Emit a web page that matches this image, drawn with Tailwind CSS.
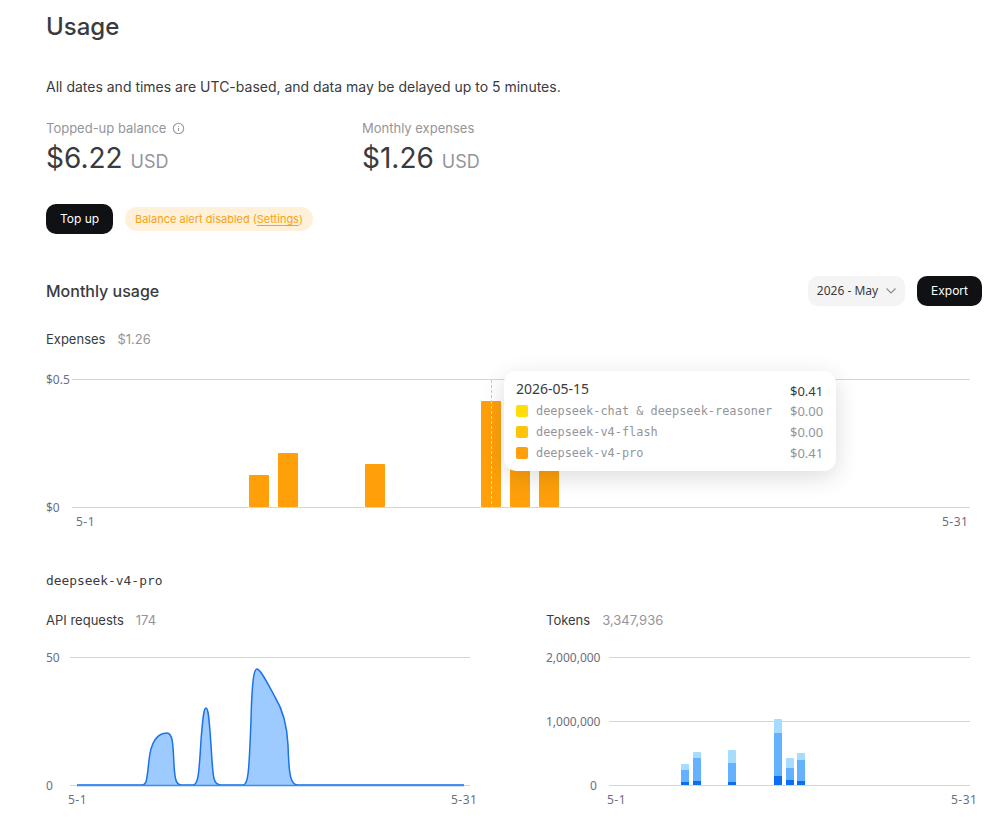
<!DOCTYPE html>
<html lang="en">
  <head>
    <meta charset="UTF-8" />
    <meta name="viewport" content="width=device-width, initial-scale=1.0" />
    <title>Usage</title>
    <script src="https://cdn.jsdelivr.net/npm/@tailwindcss/browser@4"></script>
  </head>
  <body class="bg-white font-['Inter',sans-serif] text-[#3a3b40] overflow-hidden h-[829px]">
    <main class="relative w-[1008px] pl-[46px] pr-[26px]">
      <h1 class="text-2xl leading-[32px] pt-[11px] font-medium">Usage</h1>

      <p class="mt-[34px] text-sm leading-[20px]">All dates and times are UTC-based, and data may be delayed up to 5 minutes.</p>

      <div class="mt-[22px] flex">
        <div class="w-[316px]">
          <div class="flex items-center gap-[6px] text-[13px] leading-[18px] text-[#94959b]">
            Topped-up balance
            <svg class="w-[13px] h-[13px]" viewBox="0 0 14 14" fill="none" stroke="currentColor" stroke-width="1.1">
              <circle cx="7" cy="7" r="5.6" />
              <path d="M7 6.4v3.2M7 4.2v1" />
            </svg>
          </div>
          <div class="mt-[3px] flex items-baseline gap-[8px]">
            <span class="text-[28px] leading-[36px]">$6.22</span>
            <span class="text-lg text-[#94959b]">USD</span>
          </div>
        </div>
        <div>
          <div class="text-[13px] leading-[18px] text-[#94959b]">Monthly expenses</div>
          <div class="mt-[3px] flex items-baseline gap-[8px]">
            <span class="text-[28px] leading-[36px]">$1.26</span>
            <span class="text-lg text-[#94959b]">USD</span>
          </div>
        </div>
      </div>

      <div class="mt-[28px] flex items-center gap-[12px]">
        <button class="h-[30px] w-[67px] rounded-[10px] bg-[#101114] text-white text-xs">Top up</button>
        <div class="h-[24px] px-[10px] rounded-full bg-[#fff0d9] text-[#f7a30c] text-[11px] leading-[24px]">
          Balance alert disabled (<span class="underline underline-offset-2">Settings</span>)
        </div>
      </div>

      <div class="mt-[42px] flex items-center justify-between h-[30px]">
        <h2 class="text-base font-medium">Monthly usage</h2>
        <div class="flex items-center gap-[12px]">
          <div class="h-[30px] w-[97px] rounded-[10px] bg-[#f4f4f5] flex items-center justify-center gap-[8px] font-['Noto_Sans',sans-serif] text-xs">
            2026 - May
            <svg class="w-[10px] h-[6px] text-[#8b8c92]" viewBox="0 0 10 6" fill="none" stroke="currentColor" stroke-width="1.1">
              <path d="M.5.5l4.500 4.500L9.500.5" />
            </svg>
          </div>
          <button class="h-[30px] w-[65px] rounded-[10px] bg-[#101114] text-white text-xs">Export</button>
        </div>
      </div>

      <div class="mt-[24px] flex gap-[12px] text-[13px] leading-[18px]">
        <span>Expenses</span>
        <span class="text-[#94959b]">$1.26</span>
      </div>

      <!-- expenses chart -->
      <svg class="block -ml-[46px] mt-[17px]" width="1008" height="185" viewBox="0 365 1008 185" font-family="Noto Sans, sans-serif" font-size="12" fill="#6b6e82">
        <path d="M72 379.500H970M72 507.500H970" stroke="#d4d5dd" />
        <text x="46" y="384">$0.5</text>
        <text x="46" y="512">$0</text>
        <text x="76" y="526" letter-spacing=".5">5-1</text>
        <text x="942" y="526" letter-spacing=".5">5-31</text>
        <g fill="#ffa00a">
          <rect x="249" y="475" width="20" height="32" rx="1" />
          <rect x="278" y="453" width="20" height="54" rx="1" />
          <rect x="365" y="464" width="20" height="43" rx="1" />
          <rect x="481" y="401" width="20" height="106" rx="1" />
          <rect x="510" y="420" width="20" height="87" rx="1" />
          <rect x="539" y="430" width="20" height="77" rx="1" />
        </g>
        <path d="M491.500 380V401" stroke="#c8c9d0" stroke-dasharray="3 2" />
        <path d="M491.500 401V507" stroke="#ffd9a0" stroke-dasharray="3 2" />
      </svg>

      <!-- tooltip over chart -->
      <div class="absolute left-[504px] top-[371px] w-[332px] h-[100px] rounded-[12px] bg-white shadow-[0_6px_24px_rgba(0,0,0,0.14)] px-[12px] pt-[8px] font-['Noto_Sans',sans-serif] text-[13px]">
        <div class="flex justify-between h-[22px] leading-[25px]">
          <span class="text-sm">2026-05-15</span>
          <span class="w-[34px]">$0.41</span>
        </div>
        <div class="flex items-center h-[20px] mb-[1px] text-[#94959b]">
          <span class="w-[12px] h-[12px] rounded-[2px] bg-[#ffdd0a]"></span>
          <span class="ml-[8px] pt-[2px] font-['DejaVu_Sans_Mono',monospace] text-[11.900px]">deepseek-chat &amp; deepseek-reasoner</span>
          <span class="ml-auto w-[34px] pt-[2px]">$0.00</span>
        </div>
        <div class="flex items-center h-[20px] mb-[1px] text-[#94959b]">
          <span class="w-[12px] h-[12px] rounded-[2px] bg-[#ffc40a]"></span>
          <span class="ml-[8px] pt-[2px] font-['DejaVu_Sans_Mono',monospace] text-[11.900px]">deepseek-v4-flash</span>
          <span class="ml-auto w-[34px] pt-[2px]">$0.00</span>
        </div>
        <div class="flex items-center h-[20px] text-[#94959b]">
          <span class="w-[12px] h-[12px] rounded-[2px] bg-[#ffa00a]"></span>
          <span class="ml-[8px] pt-[2px] font-['DejaVu_Sans_Mono',monospace] text-[11.900px]">deepseek-v4-pro</span>
          <span class="ml-auto w-[34px] pt-[2px]">$0.41</span>
        </div>
      </div>

      <h3 class="mt-[22px] font-['DejaVu_Sans_Mono',monospace] text-[12.900px] leading-[18px] text-[#3a3b40]">deepseek-v4-pro</h3>

      <div class="mt-[21px] flex text-[13px] leading-[18px]">
        <div class="w-[500px] flex gap-[12px]">
          <span>API requests</span>
          <span class="text-[#94959b]">174</span>
        </div>
        <div class="flex gap-[12px]">
          <span>Tokens</span>
          <span class="text-[#94959b]">3,347,936</span>
        </div>
      </div>

      <!-- requests and tokens charts -->
      <svg class="block -ml-[46px] mt-[20px]" width="1008" height="180" viewBox="0 649 1008 180" font-family="Noto Sans, sans-serif" font-size="12" fill="#6b6e82">
        <path d="M70 657.500H470M70 785.500H470" stroke="#d4d5dd" />
        <text x="46" y="662">50</text>
        <text x="46" y="790">0</text>
        <text x="68" y="804" letter-spacing=".5">5-1</text>
        <text x="451" y="804" letter-spacing=".5">5-31</text>
        <path d="M77 785H142C147 785 147 778 149 760C151 742 157 733 167 733C173 733 173 745 174 765C175 780 176 785 182 785H193C198 785 199 775 201 740C203 715 204 708 206 708C208 708 209 715 211 745C213 778 213 785 221 785H243C248 785 249 775 251 720C252 680 254 669 257 669C260 669 266 680 275 697C283 710 287 725 288 745C289 778 291 785 298 785H464" fill="#9ecbff" stroke="#1a73ea" stroke-width="1.500" />
        <path d="M77 785.500H464" stroke="#3b8aef" stroke-width="1.500" />

        <path d="M609 657.500H970M609 721.500H970M609 785.500H970" stroke="#d4d5dd" />
        <text x="546" y="662">2,000,000</text>
        <text x="546" y="726">1,000,000</text>
        <text x="590" y="790">0</text>
        <text x="607" y="804" letter-spacing=".5">5-1</text>
        <text x="951" y="804" letter-spacing=".5">5-31</text>
        <g fill="#a5dcff">
          <rect x="681" y="764" width="8" height="7" rx="1" />
          <rect x="693" y="752" width="8" height="7" rx="1" />
          <rect x="728" y="750" width="8" height="14" rx="1" />
          <rect x="774" y="719" width="8" height="15" rx="1" />
          <rect x="786" y="758" width="8" height="11" rx="1" />
          <rect x="797" y="753" width="8" height="8" rx="1" />
        </g>
        <g fill="#64b2ff">
          <rect x="681" y="770" width="8" height="12" />
          <rect x="693" y="758" width="8" height="23" />
          <rect x="728" y="763" width="8" height="19" />
          <rect x="774" y="733" width="8" height="43" />
          <rect x="786" y="768" width="8" height="12" />
          <rect x="797" y="760" width="8" height="21" />
        </g>
        <g fill="#0a6ff0">
          <rect x="681" y="782" width="8" height="3" />
          <rect x="693" y="781" width="8" height="4" />
          <rect x="728" y="782" width="8" height="3" />
          <rect x="774" y="776" width="8" height="9" />
          <rect x="786" y="780" width="8" height="5" />
          <rect x="797" y="781" width="8" height="4" />
        </g>
      </svg>
    </main>
  </body>
</html>
